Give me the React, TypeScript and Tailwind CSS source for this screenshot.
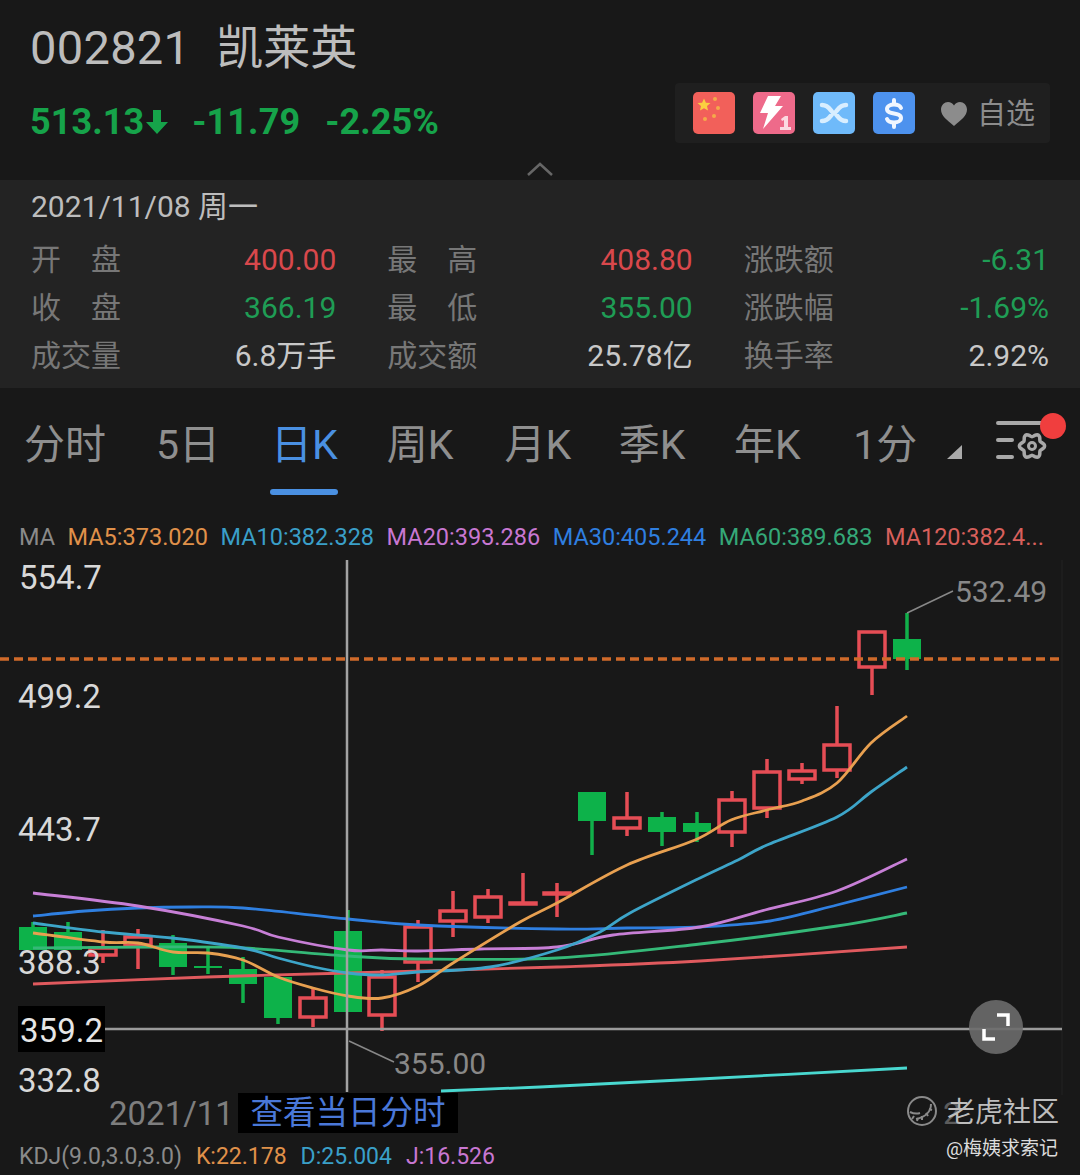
const candles = [
  { x: 33, up: false, top: 927, bottom: 950, high: 922, low: 950 },
  { x: 68, up: false, top: 932, bottom: 950, high: 922, low: 950 },
  { x: 103, up: true, top: 948, bottom: 955, high: 930, low: 963 },
  { x: 138, up: true, top: 937, bottom: 945, high: 929, low: 969 },
  { x: 173, up: false, top: 943, bottom: 967, high: 935, low: 975 },
  { x: 208, up: false, top: 966, bottom: 968, high: 948, low: 974 },
  { x: 243, up: false, top: 969, bottom: 984, high: 957, low: 1003 },
  { x: 278, up: false, top: 977, bottom: 1018, high: 977, low: 1024 },
  { x: 313, up: true, top: 998, bottom: 1017, high: 988, low: 1027 },
  { x: 348, up: false, top: 931, bottom: 1012, high: 910, low: 1012 },
  { x: 382, up: true, top: 977, bottom: 1015, high: 970, low: 1031 },
  { x: 418, up: true, top: 927, bottom: 962, high: 920, low: 982 },
  { x: 453, up: true, top: 911, bottom: 921, high: 891, low: 937 },
  { x: 488, up: true, top: 897, bottom: 917, high: 889, low: 923 },
  { x: 523, up: true, top: 903, bottom: 904, high: 873, low: 904 },
  { x: 557, up: true, top: 893, bottom: 894, high: 883, low: 917 },
  { x: 592, up: false, top: 792, bottom: 821, high: 792, low: 855 },
  { x: 627, up: true, top: 818, bottom: 828, high: 792, low: 836 },
  { x: 662, up: false, top: 817, bottom: 832, high: 812, low: 846 },
  { x: 697, up: false, top: 823, bottom: 832, high: 812, low: 842 },
  { x: 732, up: true, top: 800, bottom: 832, high: 791, low: 847 },
  { x: 767, up: true, top: 772, bottom: 808, high: 759, low: 818 },
  { x: 802, up: true, top: 771, bottom: 779, high: 763, low: 784 },
  { x: 837, up: true, top: 745, bottom: 770, high: 706, low: 778 },
  { x: 872, up: true, top: 632, bottom: 667, high: 631, low: 695 },
  { x: 907, up: false, top: 639, bottom: 659, high: 613, low: 670 },
]

const maLines = [
  { color: '#e05a5e', points: [[33, 984], [207, 977], [348, 973], [557, 967], [700, 961], [907, 947]] },
  { color: '#35b978', points: [[33, 948], [158, 947], [243, 948], [348, 956], [418, 959], [557, 958], [700, 944], [837, 926], [907, 913]] },
  { color: '#2f7fe0', points: [[33, 916], [85, 911], [138, 908], [190, 907], [243, 908], [348, 919], [418, 925], [557, 929], [627, 928], [700, 927], [770, 921], [837, 905], [907, 887]] },
  { color: '#c77fd6', points: [[33, 893], [138, 906], [243, 926], [278, 937], [348, 950], [382, 950], [418, 951], [480, 949], [557, 947], [613, 935], [700, 927], [765, 910], [837, 891], [907, 859]] },
  { color: '#3da5c9', points: [[33, 923], [103, 932], [172, 938], [243, 948], [278, 958], [314, 967], [348, 973], [382, 975], [418, 972], [490, 967], [557, 950], [600, 932], [630, 913], [700, 878], [738, 860], [767, 845], [837, 817], [871, 792], [907, 767]] },
  { color: '#e8a050', points: [[33, 933], [103, 942], [138, 943], [173, 952], [208, 953], [243, 960], [278, 977], [313, 988], [348, 996], [382, 998], [418, 986], [453, 963], [520, 922], [557, 903], [627, 865], [695, 840], [731, 820], [767, 810], [802, 801], [837, 783], [871, 743], [907, 716]] },
]

// catmull-rom through the sampled points
function smooth(pts: number[][]) {
  let d = `M${pts[0][0]} ${pts[0][1]}`
  for (let i = 0; i < pts.length - 1; i++) {
    const p0 = pts[i - 1] ?? pts[i]
    const p1 = pts[i]
    const p2 = pts[i + 1]
    const p3 = pts[i + 2] ?? p2
    const c1x = p1[0] + (p2[0] - p0[0]) / 6
    const c1y = p1[1] + (p2[1] - p0[1]) / 6
    const c2x = p2[0] - (p3[0] - p1[0]) / 6
    const c2y = p2[1] - (p3[1] - p1[1]) / 6
    d += ` C${c1x.toFixed(1)} ${c1y.toFixed(1)} ${c2x.toFixed(1)} ${c2y.toFixed(1)} ${p2[0]} ${p2[1]}`
  }
  return d
}

const quotes = [
  [['开', '盘'], '400.00', 'text-[#d9484c]', ['最', '高'], '408.80', 'text-[#d9484c]', ['涨跌额'], '-6.31', 'text-[#1f9d55]'],
  [['收', '盘'], '366.19', 'text-[#1f9d55]', ['最', '低'], '355.00', 'text-[#1f9d55]', ['涨跌幅'], '-1.69%', 'text-[#1f9d55]'],
  [['成交量'], '6.8万手', 'text-[#c8c8c8]', ['成交额'], '25.78亿', 'text-[#c8c8c8]', ['换手率'], '2.92%', 'text-[#c8c8c8]'],
] as const

const maItems = [
  { label: 'MA5:373.020', cls: 'text-[#e0914a]' },
  { label: 'MA10:382.328', cls: 'text-[#3a9fc8]' },
  { label: 'MA20:393.286', cls: 'text-[#c877d2]' },
  { label: 'MA30:405.244', cls: 'text-[#2f7fe0]' },
  { label: 'MA60:389.683', cls: 'text-[#35a878]' },
  { label: 'MA120:382.4...', cls: 'text-[#d8605c]' },
]

const tabs = [
  { label: '分时', cls: '' },
  { label: '5日', cls: 'ml-[50px]' },
  { label: '日K', cls: 'ml-[51px]' },
  { label: '周K', cls: 'ml-[49px]' },
  { label: '月K', cls: 'ml-[51px]' },
  { label: '季K', cls: 'ml-[47.5px]' },
  { label: '年K', cls: 'ml-[48.5px]' },
  { label: '1分', cls: 'ml-[52.5px]' },
]

// six lobes round the settings gear
const gearPath = Array.from({ length: 73 }, (_, i) => {
  const a = (i / 72) * Math.PI * 2
  const r = 11 + 1.6 * Math.cos(6 * a)
  return `${i === 0 ? 'M' : 'L'}${(36 + r * Math.cos(a)).toFixed(1)} ${(34 + r * Math.sin(a)).toFixed(1)}`
}).join(' ')

function QuoteCell({ label, value, valueCls }: { label: readonly string[]; value: string; valueCls: string }) {
  return (
    <div className="flex items-center justify-between">
      <div className="flex w-[90px] justify-between text-[#777]">
        {label.map((t) => (
          <span key={t}>{t}</span>
        ))}
      </div>
      <span className={valueCls}>{value}</span>
    </div>
  )
}

function HeaderIcons() {
  return (
    <div className="flex h-[60px] w-[375px] items-center rounded bg-[#1f1f1f] pl-[18px]">
      <svg width="42" height="42" viewBox="0 0 42 42" className="mr-[18px]">
        <rect width="42" height="42" rx="5" fill="#f2605a" />
        <path d="M11 6.500l1.900 4.200 4.600.4-3.500 3 1 4.500-4-2.400-4 2.400 1-4.500-3.500-3 4.600-.4z" fill="#fbd040" />
        <circle cx="22" cy="7" r="2" fill="#f5a94a" />
        <circle cx="25" cy="16" r="2" fill="#f5a94a" />
        <circle cx="21" cy="24" r="2" fill="#f5a94a" />
        <circle cx="12" cy="27" r="2" fill="#f5a94a" />
      </svg>
      <svg width="42" height="42" viewBox="0 0 42 42" className="mr-[18px]">
        <rect width="42" height="42" rx="5" fill="#ee6a8a" />
        <path d="M15 4h13l-6 10h8L10 37l5-16H7z" fill="#fff" />
        <path d="M28 27l4-3h3v11h3v3H27v-3h4v-7l-2 1z" fill="#fbd9e1" />
      </svg>
      <svg width="42" height="42" viewBox="0 0 42 42" className="mr-[18px]">
        <rect width="42" height="42" rx="5" fill="#6fbafa" />
        <path d="M9 13c8 0 9 8 12 8s4-8 12-8M9 29c8 0 9-8 12-8s4 8 12 8" fill="none" stroke="#d8eeff" strokeWidth="4.500" strokeLinecap="round" />
      </svg>
      <svg width="42" height="42" viewBox="0 0 42 42" className="mr-[26px]">
        <rect width="42" height="42" rx="5" fill="#4d92ee" />
        <path d="M28 16c-1-2.500-3.500-3.500-7-3.500s-7 1.500-7 4.500c0 6.500 14 2.500 14 9 0 3-3.500 4.500-7 4.500s-6-1-7-3.500" fill="none" stroke="#f0f6ff" strokeWidth="4" strokeLinecap="round" />
        <path d="M21 8v4M21 31v4" stroke="#f0f6ff" strokeWidth="4" strokeLinecap="round" />
      </svg>
      <svg width="26" height="24" viewBox="0 0 26 24" className="mr-[10px] mt-[2px]">
        <path d="M13 24C6 18 0 14 0 7.500 0 3 3.500 0 7 0c2.500 0 4.800 1.300 6 3.500C14.200 1.300 16.500 0 19 0c3.500 0 7 3 7 7.500C26 14 20 18 13 24z" fill="#8c8c8c" />
      </svg>
      <span className="mt-[3px] text-[29px] leading-none text-[#8c8c8c]">自选</span>
    </div>
  )
}

function KChart() {
  return (
    <svg width="1080" height="535" viewBox="0 560 1080 535" className="block">
      <line x1="1062" y1="560" x2="1062" y2="1095" stroke="#222" strokeWidth="1" />
      {candles.map((c) =>
        c.up ? (
          <g key={c.x} stroke="#e64d55" strokeWidth="3.500" fill="none">
            <line x1={c.x} y1={c.high} x2={c.x} y2={c.top} />
            <line x1={c.x} y1={c.bottom} x2={c.x} y2={c.low} />
            <rect x={c.x - 13} y={c.top} width="26" height={c.bottom - c.top} />
          </g>
        ) : (
          <g key={c.x}>
            <line x1={c.x} y1={c.high} x2={c.x} y2={c.low} stroke="#11b04a" strokeWidth="3.500" />
            <rect x={c.x - 14} y={c.top} width="28" height={c.bottom - c.top} fill="#0db24a" />
          </g>
        ),
      )}
      <line x1="0" y1="659" x2="1062" y2="659" stroke="#cf6a2a" strokeWidth="3.500" strokeDasharray="9 5" />
      {maLines.map((l) => (
        <path key={l.color} d={smooth(l.points)} fill="none" stroke={l.color} strokeWidth="2.800" />
      ))}
      <path d={smooth([[441, 1091], [540, 1087], [700, 1079], [907, 1068]])} fill="none" stroke="#49d8d0" strokeWidth="2.800" />
      <line x1="347" y1="560" x2="347" y2="1092" stroke="#a3a3a3" strokeWidth="2.500" />
      <line x1="105" y1="1029" x2="1062" y2="1029" stroke="#9a9a9a" strokeWidth="2.500" />
      <polyline points="907,613 953,591" fill="none" stroke="#888" strokeWidth="1.500" />
      <polyline points="349,1041 394,1062" fill="none" stroke="#888" strokeWidth="1.500" />
    </svg>
  )
}

export default function App() {
  return (
    <div className="flex h-[1175px] w-[1080px] flex-col overflow-hidden bg-[#181818] font-[Roboto,'Noto_Sans_CJK_SC',sans-serif]">
      {/* header */}
      <div className="relative h-[180px] shrink-0 pl-[30px] pr-[30px] pt-[22px]">
        <div className="flex h-[50px] items-center text-[47px] leading-none text-[#bdbdbd]">
          <span className="tracking-[0.3px]">002821</span>
          <span className="ml-[26px]">凯莱英</span>
        </div>
        <div className="mt-[11px] flex items-start justify-between">
          <div className="mt-[21px] flex items-center text-[36px] font-bold leading-none tracking-[0.1px] text-[#16a34a]">
            <span>513.13</span>
            <svg width="24" height="26" viewBox="0 0 24 26" className="ml-[1px]">
              <path d="M8 1h8v12h7L12 25 1 13h7z" fill="#16a34a" />
            </svg>
            <span className="ml-[23px]">-11.79</span>
            <span className="ml-[25px]">-2.25%</span>
          </div>
          <HeaderIcons />
        </div>
        <svg width="26" height="14" viewBox="0 0 26 14" className="absolute bottom-[4px] left-[527px]">
          <path d="M1 13L13 2l12 11" fill="none" stroke="#666" strokeWidth="2.500" />
        </svg>
      </div>

      {/* day detail */}
      <div className="h-[208px] shrink-0 bg-[#232323] px-[31px] text-[30px] leading-[48px]">
        <div className="flex h-[56px] items-center pb-[2px] text-[30px] leading-none text-[#bdbdbd]">2021/11/08 周一</div>
        {quotes.map((q) => (
          <div key={q[1]} className="grid grid-cols-3 gap-x-[51px]">
            <QuoteCell label={q[0]} value={q[1]} valueCls={q[2]} />
            <QuoteCell label={q[3]} value={q[4]} valueCls={q[5]} />
            <QuoteCell label={q[6]} value={q[7]} valueCls={q[8]} />
          </div>
        ))}
      </div>

      {/* period tabs */}
      <div className="relative flex h-[112px] shrink-0 items-start pl-[24px] pt-[33px] text-[41px] leading-[48px] text-[#8f8f8f]">
        {tabs.map((t) => (
          <div key={t.label} className={t.label === '日K' ? `relative text-[#4a90e2] ${t.cls}` : t.cls}>
            {t.label}
            {t.label === '日K' && <div className="absolute left-[-1px] top-[68px] h-[6px] w-[68px] rounded-sm bg-[#4a90e2]" />}
          </div>
        ))}
        <svg width="16" height="14" viewBox="0 0 16 14" className="absolute left-[947px] top-[57px]">
          <path d="M15 0v14H0z" fill="#aaa" />
        </svg>
        <svg width="76" height="52" viewBox="0 0 76 52" className="absolute left-[996px] top-[24px]">
          <g stroke="#a8a8a8" strokeWidth="4" strokeLinecap="round" fill="none">
            <path d="M2 11h46M2 28h14M2 45h14" />
            <path d={gearPath} strokeWidth="3.500" />
            <circle cx="36" cy="34" r="3.500" strokeWidth="3" />
          </g>
          <circle cx="57" cy="14" r="13" fill="#f03e3e" />
        </svg>
      </div>

      {/* moving averages */}
      <div className="flex h-[60px] shrink-0 items-center gap-x-[12.5px] pb-[2px] pl-[19px] pt-[18px] text-[23.5px] leading-none">
        <span className="text-[#8a8a8a]">MA</span>
        {maItems.map((m) => (
          <span key={m.label} className={m.cls}>{m.label}</span>
        ))}
      </div>

      {/* candles */}
      <div className="relative h-[535px] shrink-0">
        <KChart />
        <span className="absolute left-[19px] top-[-1px] text-[33px] leading-[38px] text-[#d8d8d8]">554.7</span>
        <span className="absolute left-[18px] top-[118px] text-[33px] leading-[38px] text-[#d8d8d8]">499.2</span>
        <span className="absolute left-[18px] top-[251px] text-[33px] leading-[38px] text-[#d8d8d8]">443.7</span>
        <span className="absolute left-[18px] top-[384px] text-[33px] leading-[38px] text-[#d8d8d8]">388.3</span>
        <span className="absolute left-[18px] top-[446px] flex h-[46px] w-[87px] items-center justify-center bg-black pt-[2px] text-[33px] leading-none text-[#e6e6e6]">359.2</span>
        <span className="absolute left-[18px] top-[502px] text-[33px] leading-[38px] text-[#d8d8d8]">332.8</span>
        <span className="absolute left-[955px] top-[14px] text-[30px] leading-[36px] text-[#888]">532.49</span>
        <span className="absolute left-[394px] top-[486px] text-[30px] leading-[36px] text-[#888]">355.00</span>
        <div className="absolute left-[969px] top-[440px] flex h-[54px] w-[54px] items-center justify-center rounded-full bg-[#6b6b6b]/90">
          <svg width="30" height="30" viewBox="0 0 30 30" fill="none" stroke="#fff" strokeWidth="3.500">
            <path d="M16 3h11v11M3 17v10h11" />
          </svg>
        </div>
      </div>

      {/* date row + indicator row */}
      <div className="relative -mt-[2px] flex h-[40px] shrink-0 items-center pl-[109px]">
        <span className="text-[33px] leading-none text-[#7e7e7e]">2021/11</span>
        <span className="ml-[4px] flex h-[40px] w-[220px] items-center justify-center bg-black text-[32.5px] leading-none text-[#4a78d8]">查看当日分时</span>
        <svg width="32" height="32" viewBox="0 0 32 32" className="absolute left-[906px] top-[2px]" fill="none" stroke="#8a8a8a" strokeWidth="2">
          <circle cx="16" cy="16" r="14" />
          <path d="M25 9c0 7-5 13-15 15M4 17c4 2 7 2 10 1" strokeWidth="2" />
          <path d="M8 21l-2 3M12 23l-1 3M16 21l0 4M20 18l2 3M23 14l3 1" strokeWidth="2" />
        </svg>
        <span className="absolute left-[943px] top-[1px] text-[32px] leading-[38px] text-[#5c5c5c]">2</span>
        <span className="absolute left-[947px] top-[1px] text-[28px] leading-[38px] text-[#bdbdbd]">老虎社区</span>
      </div>
      <div className="relative flex h-[40px] shrink-0 items-center pl-[19px] pt-[6px] text-[23px] leading-none">
        <span className="text-[#8a8a8a]">KDJ(9.0,3.0,3.0)</span>
        <span className="ml-[14px] text-[#e0914a]">K:22.178</span>
        <span className="ml-[14px] text-[#3a9fc8]">D:25.004</span>
        <span className="ml-[14px] text-[#c877d2]">J:16.526</span>
        <span className="absolute left-[946px] top-[3px] text-[19px] leading-[26px] text-[#dcdcdc]">@梅姨求索记</span>
      </div>
    </div>
  )
}
